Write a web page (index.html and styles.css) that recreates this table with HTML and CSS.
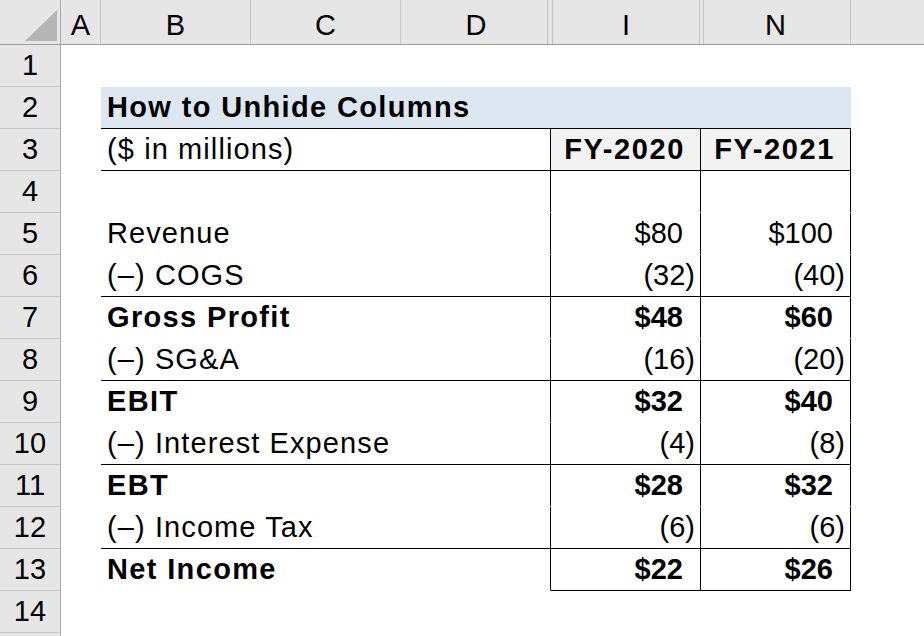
FILE: index.html
```html
<!DOCTYPE html>
<html lang="en">
<head>
<meta charset="utf-8">
<title>How to Unhide Columns</title>
<link rel="stylesheet" href="styles.css">
</head>
<body>
<div class="sheet">
  <div class="corner"><div class="tri"></div></div>
  <div class="ch">A</div>
  <div class="ch">B</div>
  <div class="ch">C</div>
  <div class="ch ch-d">D</div>
  <div class="ch ch-i">I</div>
  <div class="ch ch-n">N</div>
  <div class="ch ch-rest"></div>

  <div class="rh">1</div><div class="c"></div><div class="c lbl"></div><div class="c"></div><div class="c"></div><div class="c"></div>

  <div class="rh">2</div><div class="c"></div><div class="c title b bb">How to Unhide Columns</div><div class="c"></div>

  <div class="rh">3</div><div class="c"></div><div class="c lbl bb br">($ in millions)</div><div class="c fy bb br">FY-2020</div><div class="c fy bb br">FY-2021</div><div class="c"></div>

  <div class="rh">4</div><div class="c"></div><div class="c lbl br"></div><div class="c num br"></div><div class="c num br"></div><div class="c"></div>

  <div class="rh">5</div><div class="c"></div><div class="c lbl br">Revenue</div><div class="c num br">$80</div><div class="c num br">$100</div><div class="c"></div>

  <div class="rh">6</div><div class="c"></div><div class="c lbl bb br">(&ndash;) COGS</div><div class="c num neg bb br">(32)</div><div class="c num neg bb br">(40)</div><div class="c"></div>

  <div class="rh">7</div><div class="c"></div><div class="c lbl b br">Gross Profit</div><div class="c num bn br">$48</div><div class="c num bn br">$60</div><div class="c"></div>

  <div class="rh">8</div><div class="c"></div><div class="c lbl bb br">(&ndash;) SG&amp;A</div><div class="c num neg bb br">(16)</div><div class="c num neg bb br">(20)</div><div class="c"></div>

  <div class="rh">9</div><div class="c"></div><div class="c lbl b br">EBIT</div><div class="c num bn br">$32</div><div class="c num bn br">$40</div><div class="c"></div>

  <div class="rh">10</div><div class="c"></div><div class="c lbl bb br">(&ndash;) Interest Expense</div><div class="c num neg bb br">(4)</div><div class="c num neg bb br">(8)</div><div class="c"></div>

  <div class="rh">11</div><div class="c"></div><div class="c lbl b br">EBT</div><div class="c num bn br">$28</div><div class="c num bn br">$32</div><div class="c"></div>

  <div class="rh">12</div><div class="c"></div><div class="c lbl bb br">(&ndash;) Income Tax</div><div class="c num neg bb br">(6)</div><div class="c num neg bb br">(6)</div><div class="c"></div>

  <div class="rh">13</div><div class="c"></div><div class="c lbl b br">Net Income</div><div class="c num bn bb br">$22</div><div class="c num bn bb br">$26</div><div class="c"></div>

  <div class="rh">14</div><div class="c"></div><div class="c lbl"></div><div class="c"></div><div class="c"></div><div class="c"></div>

  <div class="rh"></div><div class="c"></div><div class="c lbl"></div><div class="c"></div><div class="c"></div><div class="c"></div>
</div>
</body>
</html>
```
FILE: styles.css
```css
* {
  box-sizing: border-box;
}

html,
body {
  margin: 0;
  padding: 0;
}

body {
  background: #ffffff;
  overflow: hidden;
  font-family: "Liberation Sans", Arial, sans-serif;
  font-size: 29px;
  color: #000000;
}

.sheet {
  display: grid;
  grid-template-columns: 61px 40px 150px 150px 150px 150px 150px 1fr;
  grid-template-rows: 45px;
  grid-auto-rows: 42px;
  width: 924px;
  height: 636px;
  overflow: hidden;
}

.sheet > div {
  display: flex;
  align-items: flex-end;
  line-height: 29px;
  white-space: nowrap;
  min-width: 0;
}

/* top-left select-all corner */
.corner {
  background: #e6e6e6;
  border-right: 1px solid #a9a9a9;
  border-bottom: 1px solid #9e9e9e;
  justify-content: flex-end;
  padding: 0 3px 3px 0;
}

.tri {
  width: 32px;
  height: 31px;
  background: #b5b5b5;
  clip-path: polygon(100% 0, 100% 100%, 0 100%);
}

/* column headers */
.ch {
  background: #e6e6e6;
  border-bottom: 1px solid #9e9e9e;
  border-right: 1px solid #c8c8c8;
  justify-content: center;
  padding-bottom: 4px;
}

.ch-d {
  border-right: none;
  box-shadow: inset -3px 0 0 #e6e6e6, inset -4px 0 0 #c4c4c4;
}

.ch-i {
  border-right: none;
  box-shadow: inset 1px 0 0 #e6e6e6, inset -1px 0 0 #e6e6e6,
    inset 2px 0 0 #c4c4c4, inset -2px 0 0 #c4c4c4;
}

.ch-n {
  box-shadow: inset 2px 0 0 #e6e6e6, inset 3px 0 0 #c4c4c4;
}

.ch-rest {
  border-right: none;
}

/* row headers */
.rh {
  background: #e6e6e6;
  border-right: 1px solid #a9a9a9;
  border-bottom: 1px solid #c8c8c8;
  justify-content: center;
  padding-bottom: 6px;
}

/* body cells */
.c {
  border-bottom: 1px solid transparent;
  padding-bottom: 6px;
}

.lbl {
  grid-column: span 3;
  padding-left: 6px;
  letter-spacing: 1.1px;
}

.title {
  grid-column: span 5;
  padding-left: 6px;
  background: #dde7f2;
}

.b {
  font-weight: bold;
  letter-spacing: 1.35px;
}

.bn {
  font-weight: bold;
}

.fy {
  background: #f2f2f2;
  font-weight: bold;
  letter-spacing: 1.6px;
  justify-content: flex-end;
  padding-right: 15px;
}

.num {
  justify-content: flex-end;
  padding-right: 17px;
}

.num.neg {
  padding-right: 5px;
}

.bb {
  border-bottom-color: #000000;
}

.br {
  border-right: 1px solid #000000;
}
```
